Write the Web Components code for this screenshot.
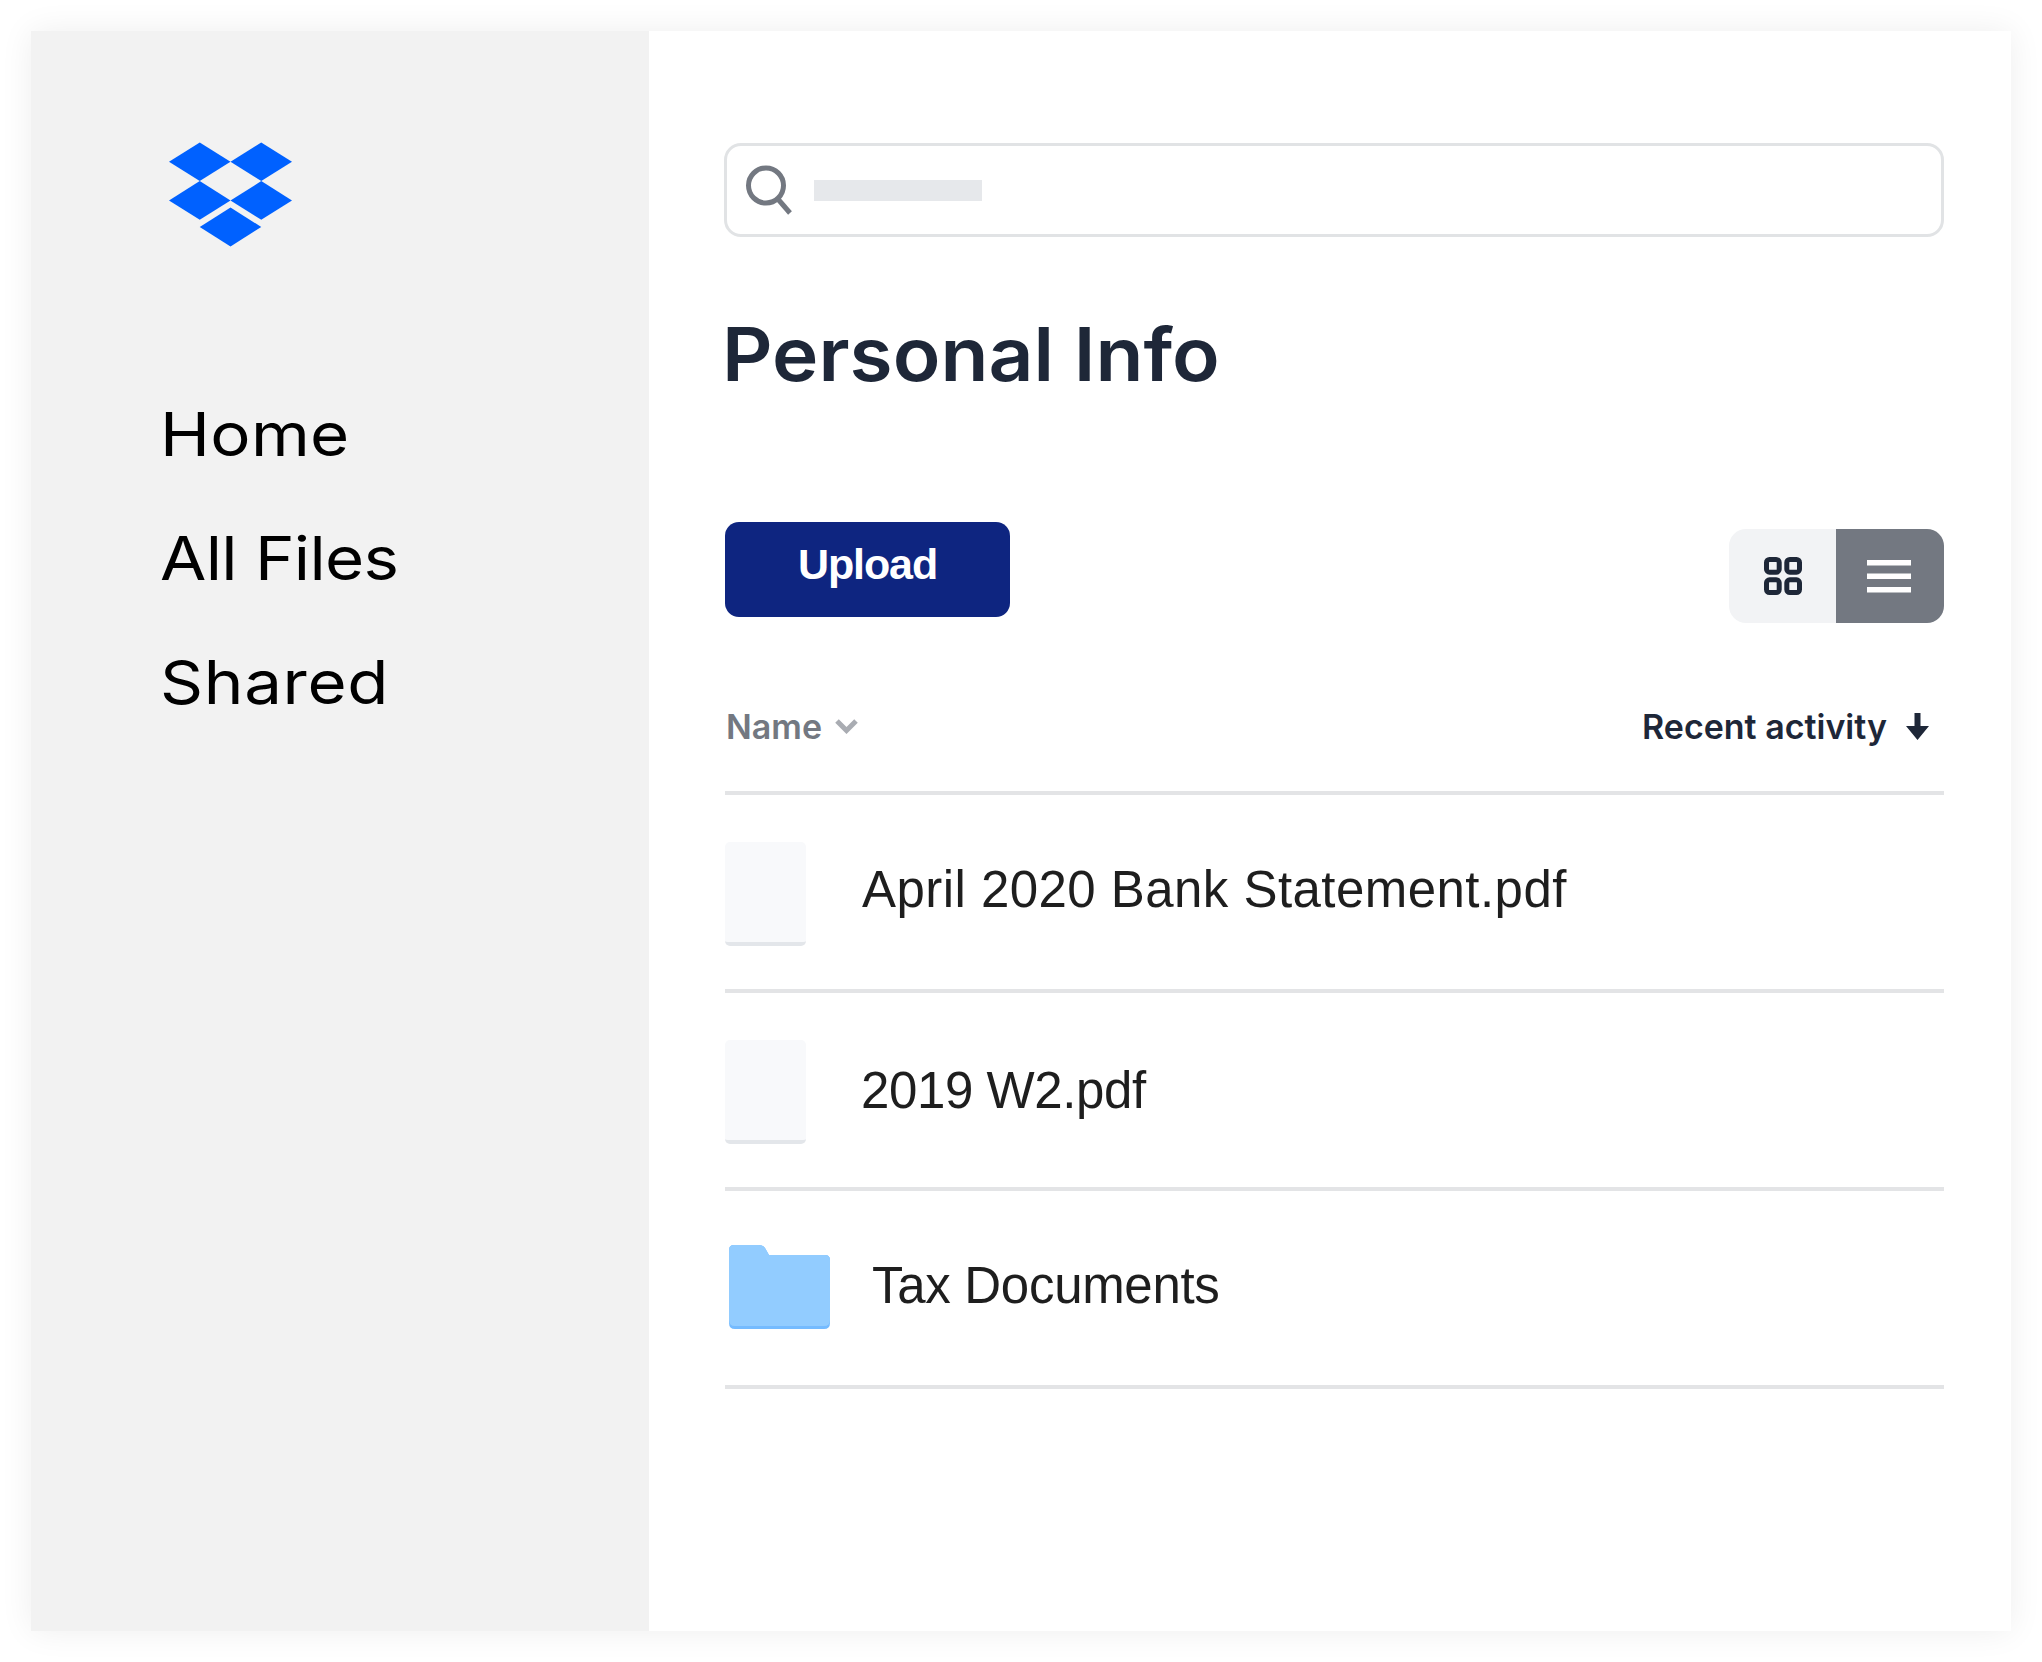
<!DOCTYPE html>
<html>
<head>
<meta charset="utf-8">
<style>
    html, body { margin: 0; background: #fff; }
</style>
</head>
<body>
<app-window>
    <side-nav slot="side">
        <nav-link style="letter-spacing:0.3px">Home</nav-link>
        <nav-link style="letter-spacing:-0.65px">All Files</nav-link>
        <nav-link style="letter-spacing:0.6px">Shared</nav-link>
    </side-nav>
    <search-box></search-box>
    <page-title>Personal Info</page-title>
    <file-toolbar></file-toolbar>
    <list-head></list-head>
    <file-row kind="file" style="--gap:56px;--track:0.45px;--drop:-5px">April 2020 Bank Statement.pdf</file-row>
    <file-row kind="file" style="--gap:55px;--track:-0.4px;--drop:1px">2019 W2.pdf</file-row>
    <file-row kind="folder" style="--gap:42px;--track:-0.3px;--drop:-5px">Tax Documents</file-row>
</app-window>

<script>
class AppWindow extends HTMLElement {
    constructor() {
        super();
        this.attachShadow({ mode: 'open' });
        this.shadowRoot.innerHTML = `
            <style>
                :host { display: block; padding: 31px; }
                .card {
                    display: flex;
                    width: 1980px;
                    height: 1600px;
                    box-shadow: 0 0 31px rgba(0, 0, 0, 0.07);
                }
                .side { width: 618px; background: #f2f2f2; }
                .main { flex: 1; background: #fff; padding: 112px 67px 0 75px; }
            </style>
            <div class="card">
                <div class="side"><slot name="side"></slot></div>
                <div class="main"><slot></slot></div>
            </div>
        `;
    }
}

class SideNav extends HTMLElement {
    constructor() {
        super();
        this.attachShadow({ mode: 'open' });
        this.shadowRoot.innerHTML = `
            <style>
                :host { display: block; padding: 111px 0 0 138px; }
                svg { display: block; width: 123px; height: 105px; margin-bottom: 149px; }
                .links { display: flex; flex-direction: column; gap: 48px; margin-left: -9px; }
            </style>
            <svg viewBox="0 0 124 105" fill="#0061ff">
                <path d="M31 0 62 19.500 31 39 0 19.500Z"/>
                <path d="M93 0 124 19.500 93 39 62 19.500Z"/>
                <path d="M31 39 62 58.500 31 78 0 58.500Z"/>
                <path d="M93 39 124 58.500 93 78 62 58.500Z"/>
                <path d="M62 65.500 93 85.250 62 105 31 85.250Z"/>
            </svg>
            <div class="links"><slot></slot></div>
        `;
    }
}

class NavLink extends HTMLElement {
    constructor() {
        super();
        this.attachShadow({ mode: 'open' });
        this.shadowRoot.innerHTML = `
            <style>
                :host {
                    display: block;
                    font: 400 60px/76px "Inter", sans-serif;
                    color: #000;
                    transform: scaleX(1.12);
                    transform-origin: left center;
                }
            </style>
            <slot></slot>
        `;
    }
}

class SearchBox extends HTMLElement {
    constructor() {
        super();
        this.attachShadow({ mode: 'open' });
        this.shadowRoot.innerHTML = `
            <style>
                :host {
                    display: flex;
                    align-items: center;
                    box-sizing: border-box;
                    height: 94px;
                    border: 3px solid #e1e3e5;
                    border-radius: 17px;
                    padding-left: 19px;
                    background: #fff;
                }
                svg { width: 46px; height: 50px; margin-right: 22px; }
                .placeholder { width: 168px; height: 21px; background: #e6e8eb; }
            </style>
            <svg viewBox="0 0 46 50" fill="none" stroke="#737881" stroke-width="5">
                <ellipse cx="20" cy="20.500" rx="17.500" ry="17.500"/>
                <path d="M31 33 44 48"/>
            </svg>
            <div class="placeholder"></div>
        `;
    }
}

class PageTitle extends HTMLElement {
    constructor() {
        super();
        this.attachShadow({ mode: 'open' });
        this.shadowRoot.innerHTML = `
            <style>
                :host {
                    display: block;
                    margin: 72px 0 0 -2px;
                    font: 600 74px/90px "Inter", sans-serif;
                    color: #1e2738;
                    transform: scaleX(1.06);
                    transform-origin: left center;
                }
            </style>
            <slot></slot>
        `;
    }
}

class FileToolbar extends HTMLElement {
    constructor() {
        super();
        this.attachShadow({ mode: 'open' });
        this.shadowRoot.innerHTML = `
            <style>
                :host {
                    display: flex;
                    justify-content: space-between;
                    align-items: flex-start;
                    margin-top: 123px;
                    padding-left: 1px;
                }
                .upload {
                    display: flex;
                    justify-content: center;
                    width: 285px;
                    height: 95px;
                    padding-top: 17px;
                    box-sizing: border-box;
                    background: #0e2580;
                    border-radius: 14px;
                    color: #fff;
                    font: 700 43px/50px "Liberation Sans", sans-serif;
                    letter-spacing: -1.1px;
                }
                .toggle {
                    display: flex;
                    margin-top: 7px;
                    height: 94px;
                    width: 215px;
                    border-radius: 17px;
                    overflow: hidden;
                }
                .grid, .list { display: flex; align-items: center; justify-content: center; }
                .grid { width: 107px; background: #f2f3f5; }
                .list { width: 108px; background: #737881; padding-right: 2px; box-sizing: border-box; }
                .grid svg { width: 38px; height: 38px; }
                .list svg { width: 44px; height: 33px; }
            </style>
            <div class="upload">Upload</div>
            <div class="toggle">
                <div class="grid">
                    <svg viewBox="0 0 38 38" fill="none" stroke="#1e2738" stroke-width="5">
                        <rect x="2.500" y="2.500" width="12.700" height="12.700" rx="3"/>
                        <rect x="22.800" y="2.500" width="12.700" height="12.700" rx="3"/>
                        <rect x="2.500" y="22.800" width="12.700" height="12.700" rx="3"/>
                        <rect x="22.800" y="22.800" width="12.700" height="12.700" rx="3"/>
                    </svg>
                </div>
                <div class="list">
                    <svg viewBox="0 0 44 33" fill="#fff">
                        <rect width="44" height="5.500"/>
                        <rect y="13.500" width="44" height="5.500"/>
                        <rect y="27" width="44" height="5.500"/>
                    </svg>
                </div>
            </div>
        `;
    }
}

class ListHead extends HTMLElement {
    constructor() {
        super();
        this.attachShadow({ mode: 'open' });
        this.shadowRoot.innerHTML = `
            <style>
                :host {
                    display: flex;
                    align-items: center;
                    justify-content: space-between;
                    box-sizing: border-box;
                    height: 105px;
                    margin-top: 67px;
                    margin-left: 1px;
                    padding: 0 15px 28px 1px;
                    border-bottom: 4px solid #e3e4e6;
                    font: 600 34px/42px "Inter", sans-serif;
                }
                .name { display: flex; align-items: center; color: #737881; }
                .name svg { width: 23px; height: 15px; margin-left: 13px; }
                .recent { display: flex; align-items: center; color: #1e2738; }
                .recent svg { width: 23px; height: 27px; margin-left: 19px; }
            </style>
            <div class="name">Name
                <svg viewBox="0 0 23 15" fill="none" stroke="#a9acb2" stroke-width="5"><path d="M2 2 11.500 11.500 21 2"/></svg>
            </div>
            <div class="recent">Recent activity
                <svg viewBox="0 0 23 27" fill="#1e2738"><path d="M8.500 0H14.500V13H23L11.500 27 0 13H8.500Z"/></svg>
            </div>
        `;
    }
}

class FileRow extends HTMLElement {
    constructor() {
        super();
        this.attachShadow({ mode: 'open' });
        const isFolder = this.getAttribute('kind') === 'folder';
        const icon = isFolder
            ? `<svg class="folder" viewBox="0 0 101 84">
                   <path fill="#75bbff" d="M5 0H30Q34 0 36 3L40 10H96Q101 10 101 15V78Q101 84 95 84H6Q0 84 0 78V5Q0 0 5 0Z"/>
                   <path fill="#92ccff" d="M5 0H30Q34 0 36 3L40 10H96Q101 10 101 15V75Q101 81 95 81H6Q0 81 0 75V5Q0 0 5 0Z"/>
               </svg>`
            : `<div class="file"></div>`;
        this.shadowRoot.innerHTML = `
            <style>
                :host {
                    display: flex;
                    align-items: center;
                    box-sizing: border-box;
                    height: 198px;
                    margin-left: 1px;
                    border-bottom: 4px solid #e3e4e6;
                    font: 400 51px/60px "Liberation Sans", sans-serif;
                    letter-spacing: var(--track);
                    color: #1e1e1e;
                }
                .file {
                    box-sizing: border-box;
                    width: 81px;
                    height: 104px;
                    margin-top: 4px;
                    background: #f8f9fb;
                    border-bottom: 4px solid #e3e6ea;
                    border-radius: 5px;
                    margin-right: var(--gap);
                }
                .folder { width: 101px; height: 84px; margin: -3px var(--gap) 0 4px; }
                .label { margin-top: var(--drop); }
            </style>
            ${icon}
            <div class="label"><slot></slot></div>
        `;
    }
}

customElements.define('app-window', AppWindow);
customElements.define('side-nav', SideNav);
customElements.define('nav-link', NavLink);
customElements.define('search-box', SearchBox);
customElements.define('page-title', PageTitle);
customElements.define('file-toolbar', FileToolbar);
customElements.define('list-head', ListHead);
customElements.define('file-row', FileRow);
</script>
</body>
</html>
